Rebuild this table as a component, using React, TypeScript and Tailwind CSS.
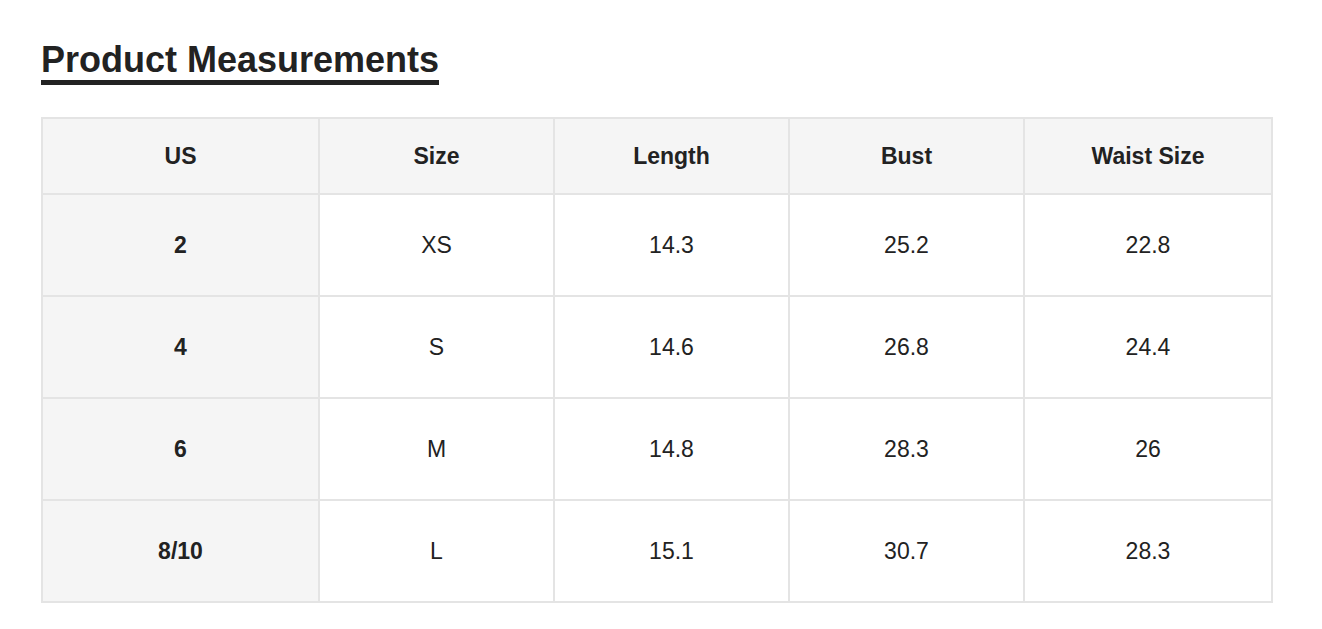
import React from "react";

const rows = [
  { us: "2", size: "XS", length: "14.3", bust: "25.2", waist: "22.8" },
  { us: "4", size: "S", length: "14.6", bust: "26.8", waist: "24.4" },
  { us: "6", size: "M", length: "14.8", bust: "28.3", waist: "26" },
  { us: "8/10", size: "L", length: "15.1", bust: "30.7", waist: "28.3" },
];

const App: React.FC = () => {
  return (
    <div className="min-h-screen bg-white text-[#222] font-['Liberation_Sans',Arial,sans-serif]">
      <div className="pl-[41px] pt-[39px]">
        <h2 className="inline-block text-[36px] font-bold leading-[41px] border-b-[5px] border-[#222]">
          Product Measurements
        </h2>
      </div>

      <table className="ml-[41px] mt-[32px] w-[1230px] table-fixed border-collapse text-[23px] text-center">
        <colgroup>
          <col className="w-[277px]" />
          <col className="w-[235px]" />
          <col className="w-[235px]" />
          <col className="w-[235px]" />
          <col className="w-[248px]" />
        </colgroup>
        <thead>
          <tr className="h-[76px] bg-[#f5f5f5] font-bold">
            <th className="border-2 border-[#e4e4e4]">US</th>
            <th className="border-2 border-[#e4e4e4]">Size</th>
            <th className="border-2 border-[#e4e4e4]">Length</th>
            <th className="border-2 border-[#e4e4e4]">Bust</th>
            <th className="border-2 border-[#e4e4e4]">Waist Size</th>
          </tr>
        </thead>
        <tbody>
          {rows.map((r) => (
            <tr key={r.us} className="h-[102px]">
              <td className="border-2 border-[#e4e4e4] bg-[#f5f5f5] font-bold">{r.us}</td>
              <td className="border-2 border-[#e4e4e4]">{r.size}</td>
              <td className="border-2 border-[#e4e4e4]">{r.length}</td>
              <td className="border-2 border-[#e4e4e4]">{r.bust}</td>
              <td className="border-2 border-[#e4e4e4]">{r.waist}</td>
            </tr>
          ))}
        </tbody>
      </table>
    </div>
  );
};

export default App;
